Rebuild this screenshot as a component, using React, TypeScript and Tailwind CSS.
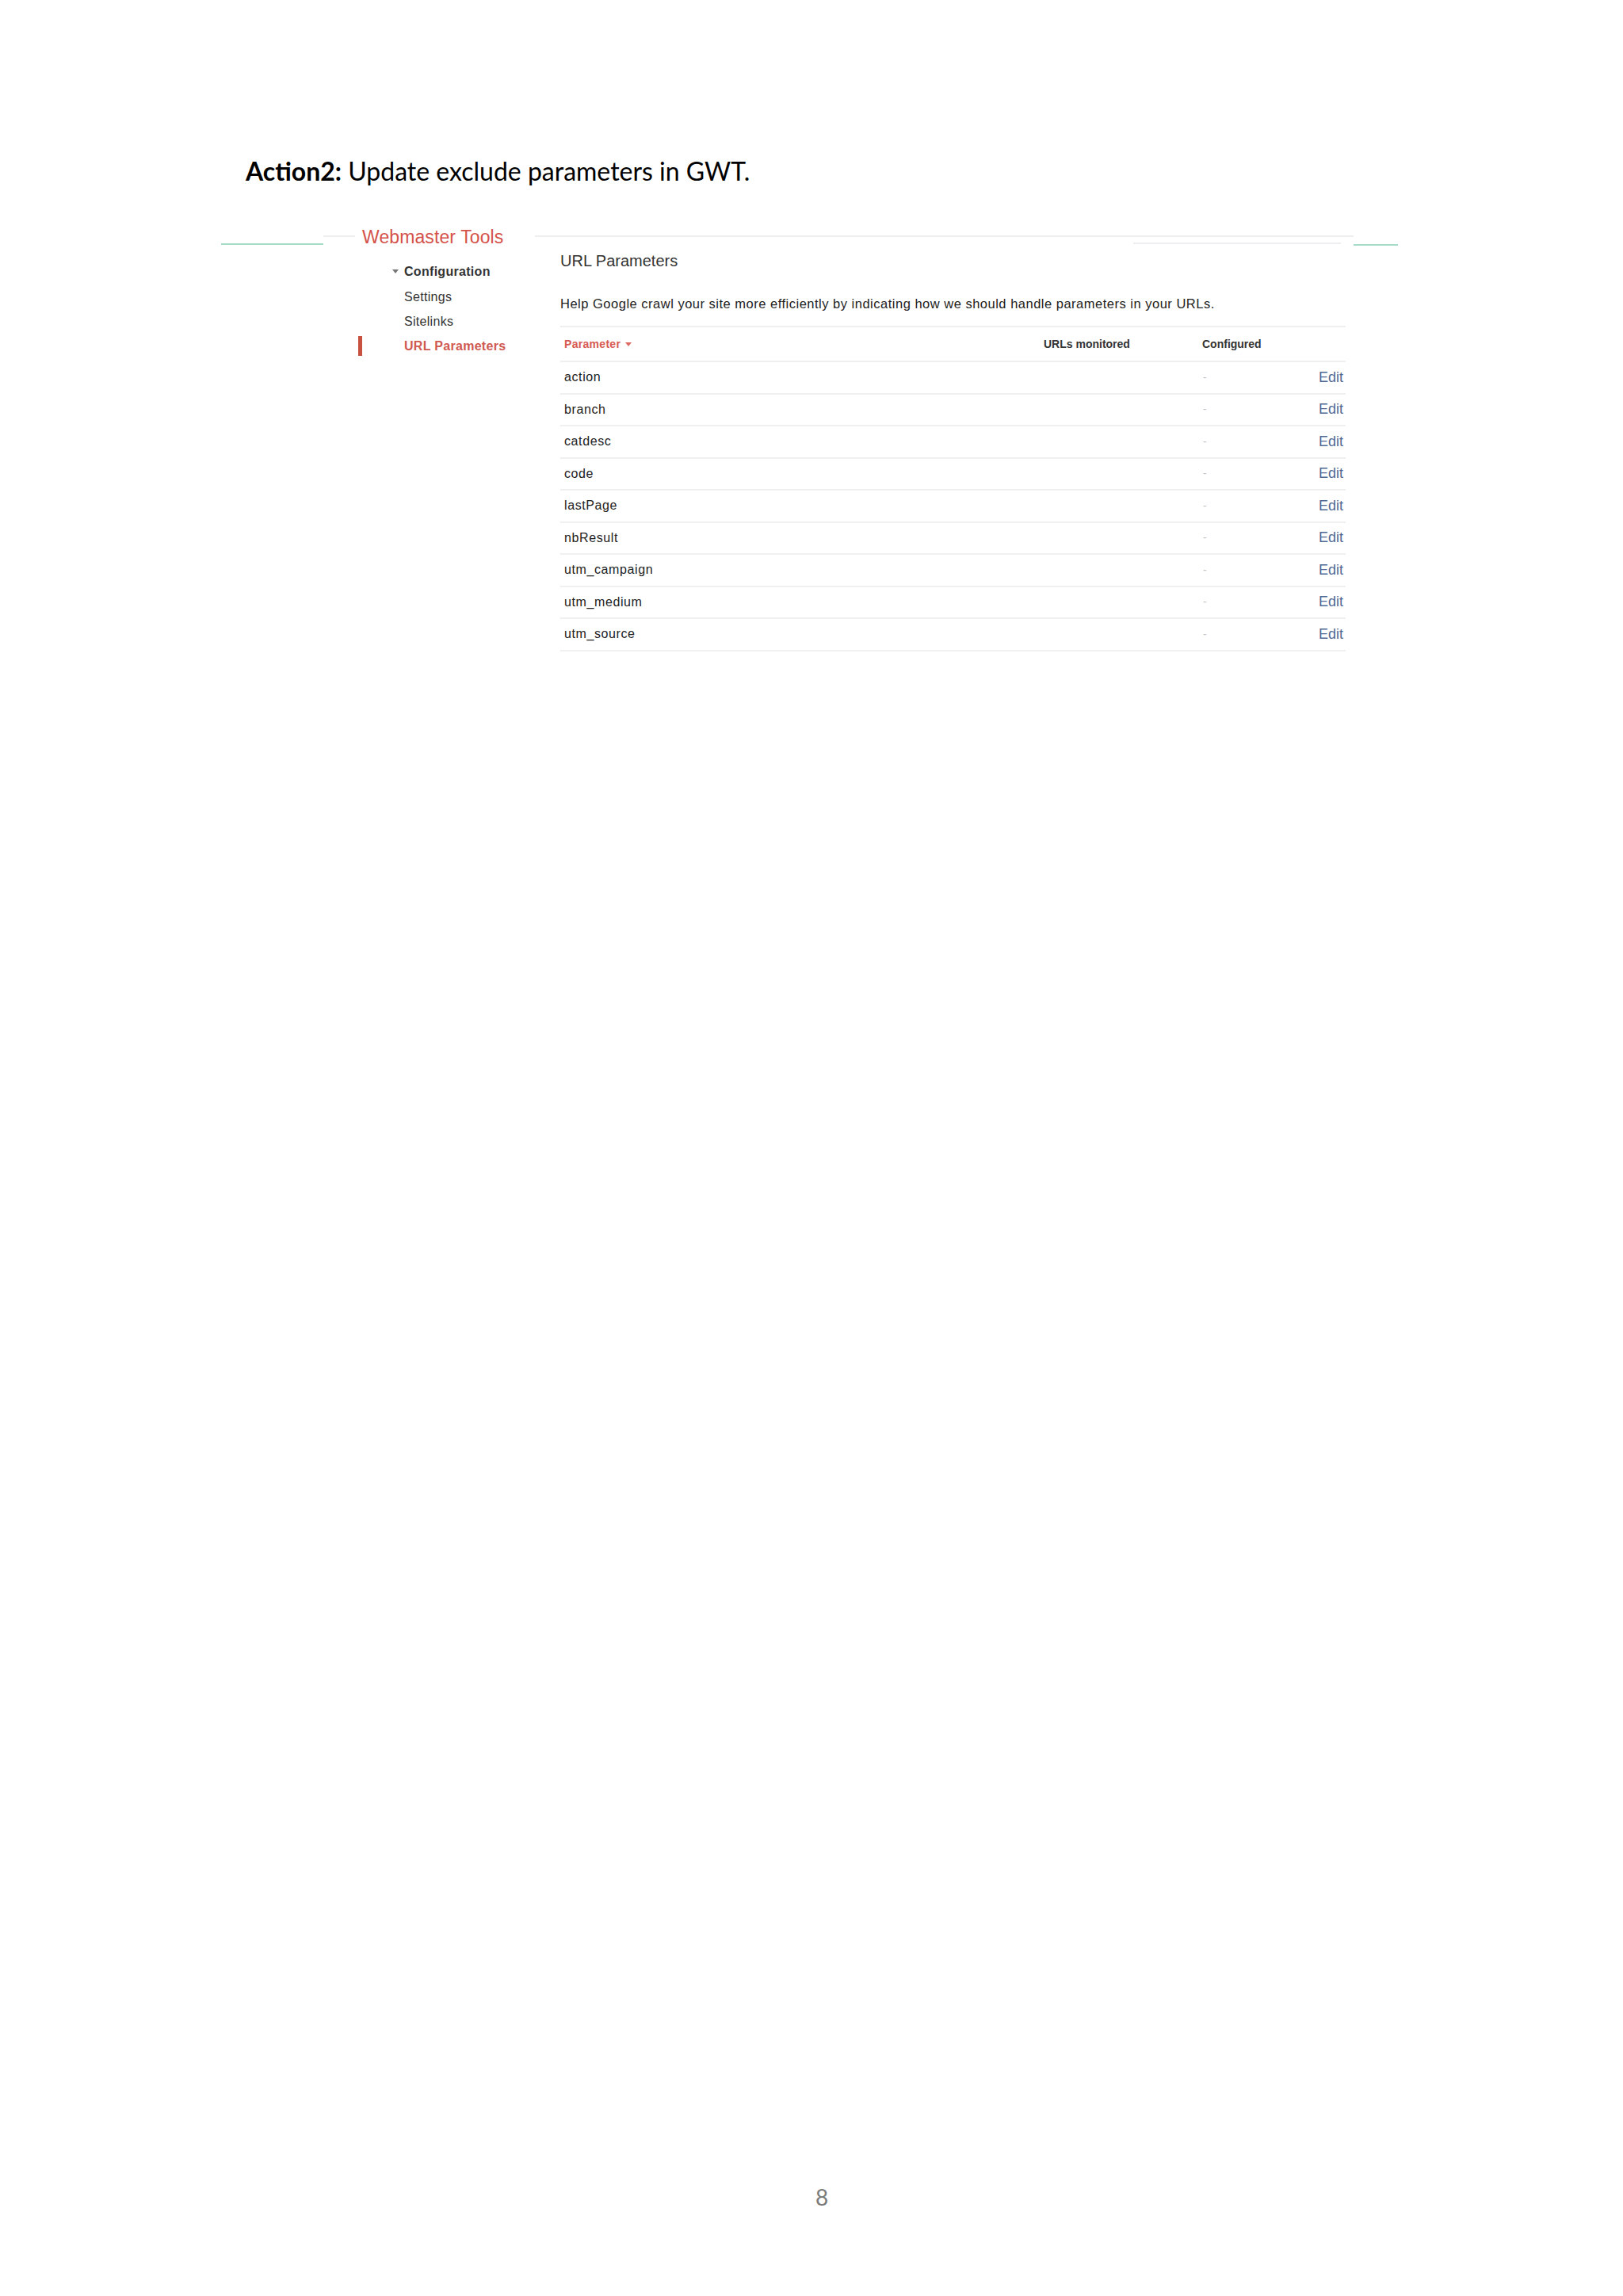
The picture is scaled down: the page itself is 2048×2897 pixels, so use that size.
const params = [
  'action',
  'branch',
  'catdesc',
  'code',
  'lastPage',
  'nbResult',
  'utm_campaign',
  'utm_medium',
  'utm_source',
];

function DownTriangle({ className }: { className: string }) {
  return (
    <svg viewBox="0 0 8 5" className={className}>
      <path d="M0 0 L8 0 L4 5 Z" fill="currentColor" />
    </svg>
  );
}

export default function App() {
  return (
    <div className="w-[2048px] h-[2897px] bg-white flex flex-col font-['Liberation_Sans',Arial,sans-serif]">
      {/* Heading */}
      <h1 className="mt-[196px] ml-[310px] font-['Lato',sans-serif] text-[32px] leading-[40px] font-normal text-black">
        <span className="font-bold">Action2:</span> Update exclude parameters in GWT.
      </h1>

      {/* Webmaster Tools screenshot */}
      <div className="mt-[52px] ml-[279px] w-[1486px]">
        {/* Top bar */}
        <div className="flex items-start h-[29px]">
          <div className="w-[129px] h-[2px] mt-[19px] bg-[#a6dbc5]" />
          <div className="w-[40px] h-[2px] mt-[9px] bg-[#eeeeee]" />
          <div className="w-[227px] pl-[9px] text-[23px] leading-[23px] tracking-[0.1px] text-[#d4524a] whitespace-nowrap">
            Webmaster Tools
          </div>
          <div className="w-[1033px] flex flex-col">
            <div className="h-[2px] mt-[9px] bg-[#eeeeee]" />
            <div className="ml-[755px] w-[262px] h-[2px] mt-[7px] bg-[#eceef0]" />
          </div>
          <div className="w-[56px] h-[2px] mt-[20px] bg-[#a6dbc5]" />
        </div>

        {/* Body */}
        <div className="flex items-start ml-[169px]">
          {/* Sidebar */}
          <div className="w-[259px] pt-[9px] text-[16px] tracking-[0.3px]">
            <div className="flex items-center h-[33px]">
              <DownTriangle className="ml-[47px] w-[8px] h-[5px] text-[#777]" />
              <span className="ml-[7px] leading-[33px] font-bold text-[#333]">Configuration</span>
            </div>
            <div className="pl-[62px] h-[31px] leading-[31px] text-[#333]">Settings</div>
            <div className="pl-[62px] h-[31px] leading-[31px] text-[#333]">Sitelinks</div>
            <div className="flex items-center h-[31px]">
              <div className="ml-[4px] w-[5px] h-[25px] bg-[#c8503f]" />
              <span className="ml-[53px] leading-[31px] font-bold text-[#d0594f]">URL Parameters</span>
            </div>
          </div>

          {/* Main */}
          <div className="w-[991px]">
            <div className="text-[20px] leading-[24px] text-[#333]">URL Parameters</div>
            <div className="mt-[32px] text-[16.5px] leading-[20px] tracking-[0.5px] text-[#222] whitespace-nowrap">
              Help Google crawl your site more efficiently by indicating how we should handle parameters in your URLs.
            </div>

            <div className="mt-[18px]">
              {/* Table header */}
              <div className="flex items-center h-[46px] border-y-2 border-[#efefef] text-[14px] font-bold">
                <div className="w-[610px] pl-[5px] flex items-center gap-[6px] tracking-[0.3px] text-[#d65a52]">
                  Parameter
                  <DownTriangle className="w-[8px] h-[5px] text-[#dd6a62]" />
                </div>
                <div className="w-[200px] text-[#333]">URLs monitored</div>
                <div className="flex-1 text-[#333]">Configured</div>
              </div>

              {/* Rows */}
              {params.map((p) => (
                <div key={p} className="flex items-center h-[40.5px] border-b-2 border-[#f0f0f0]">
                  <div className="w-[610px] pl-[5px] text-[16px] tracking-[0.6px] text-[#222]">{p}</div>
                  <div className="w-[200px]" />
                  <div className="flex-1 pl-[1px] text-[14px] text-[#c4c4c4]">-</div>
                  <div className="pr-[3px] text-[18px] text-[#4f6894]">Edit</div>
                </div>
              ))}
            </div>
          </div>
        </div>
      </div>

      {/* Page number */}
      <div className="mt-auto mb-[111px] pl-[26px] text-center font-['Lato',sans-serif] text-[28px] leading-[28px] text-[#7a7a7a]">
        8
      </div>
    </div>
  );
}
